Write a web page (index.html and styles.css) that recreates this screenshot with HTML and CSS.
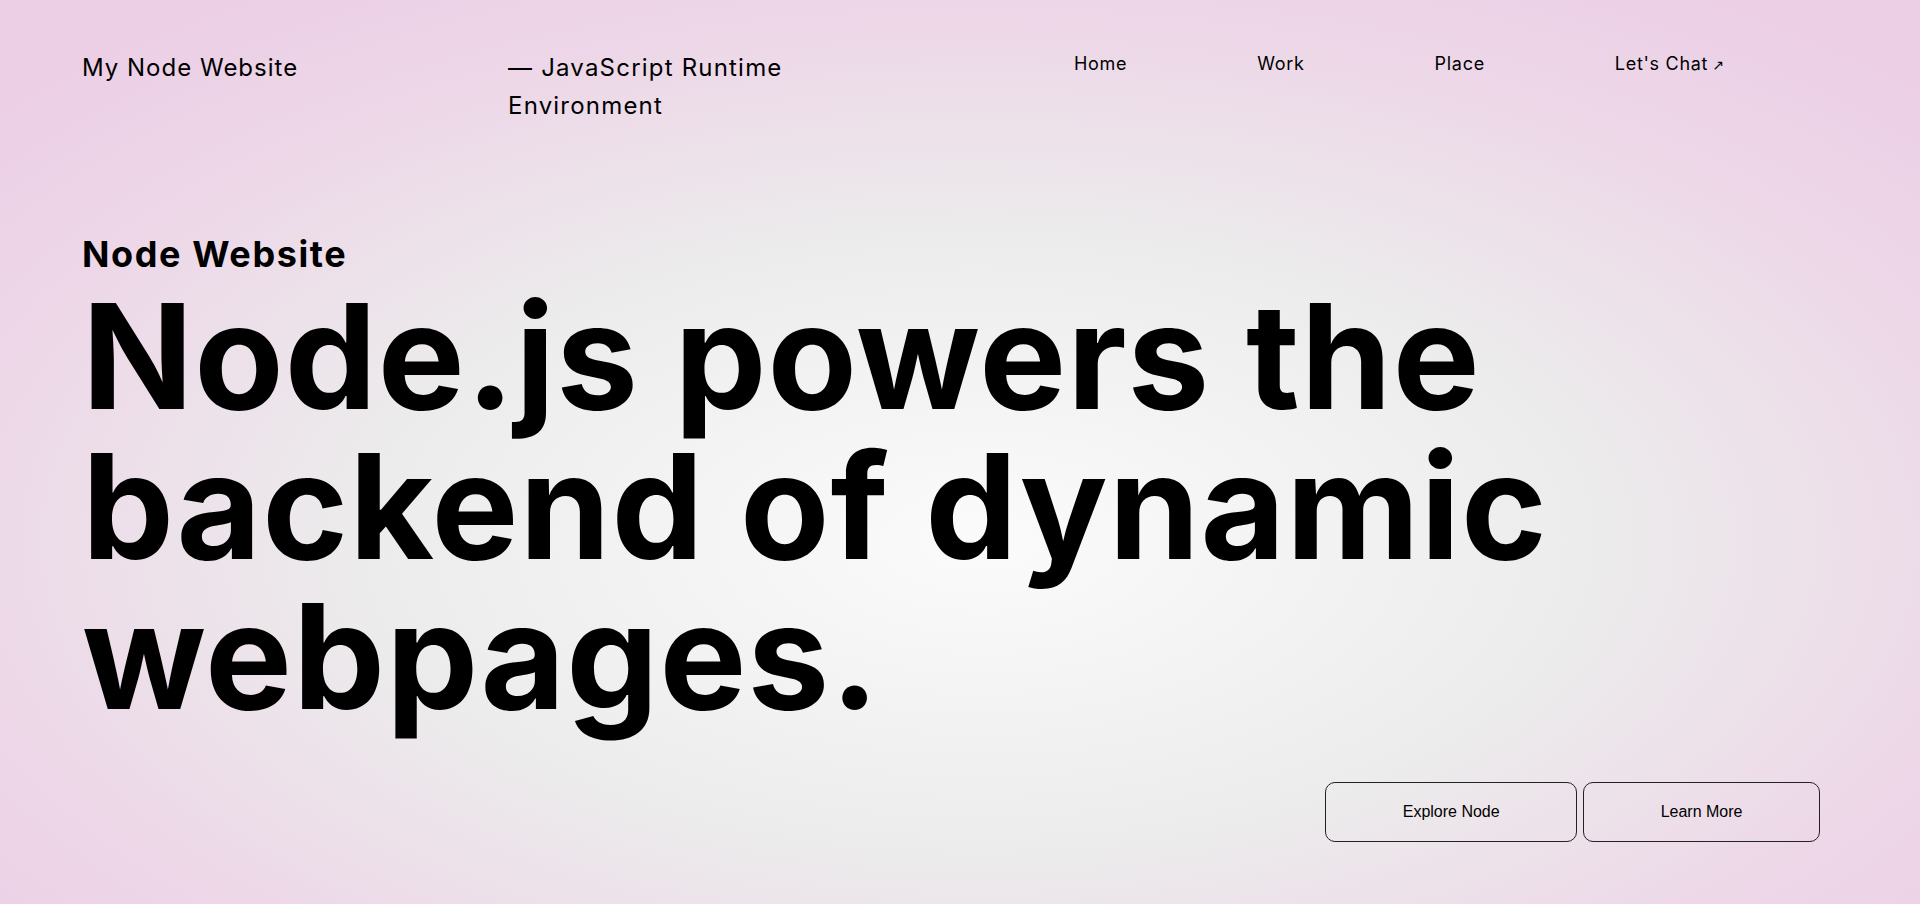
FILE: index.html
```html
<!DOCTYPE html>
<html lang="en">
<head>
<meta charset="utf-8">
<title>My Node Website</title>
<link rel="stylesheet" href="styles.css">
</head>
<body>
<div class="page">
  <header class="header">
    <div class="logo">My Node Website</div>
    <div class="tagline">— JavaScript Runtime Environment</div>
    <nav class="nav">
      <a href="#" class="nav-link">Home</a>
      <a href="#" class="nav-link">Work</a>
      <a href="#" class="nav-link">Place</a>
      <a href="#" class="nav-link">Let's Chat<span class="arrow">↗</span></a>
    </nav>
  </header>
  <main class="hero">
    <h2 class="eyebrow">Node Website</h2>
    <h1 class="title">Node.js powers the backend of dynamic webpages.</h1>
    <div class="actions">
      <button class="btn">Explore Node</button>
      <button class="btn">Learn More</button>
    </div>
  </main>
</div>
</body>
</html>
```

FILE: styles.css
```css
html, body {
  margin: 0;
  padding: 0;
  height: 100%;
}

body {
  font-family: Inter, "Noto Sans", sans-serif;
  color: #000;
  background: radial-gradient(ellipse 70% 75% at 51% 60%, #fbfbfb 0%, #ececec 45%, #edd8e8 75%, #eccee5 100%);
  min-height: 904px;
}

.page {
  padding: 0 82px;
}

.header {
  display: flex;
  align-items: flex-start;
  padding-top: 49px;
}

.logo {
  width: 426px;
  font-size: 24px;
  line-height: 38.4px;
  letter-spacing: 1px;
}

.tagline {
  width: 300px;
  font-size: 24px;
  line-height: 38.4px;
  letter-spacing: 1.2px;
}

.nav {
  display: flex;
  gap: 130px;
  margin-left: 266px;
  margin-top: 4px;
}

.nav-link {
  color: #000;
  text-decoration: none;
  font-size: 18px;
  line-height: 22px;
  letter-spacing: 0.7px;
}

.arrow {
  margin-left: 4px;
  font-size: 14px;
  font-family: "DejaVu Sans", sans-serif;
  letter-spacing: 0;
}

.hero {
  padding-top: 106px;
}

.eyebrow {
  margin: 0 0 5px;
  font-size: 36px;
  line-height: 44px;
  font-weight: 700;
  letter-spacing: 1.6px;
}

.title {
  margin: 0;
  font-size: 146px;
  line-height: 150px;
  font-weight: 700;
  letter-spacing: 1px;
  max-width: 1580px;
}

.actions {
  display: flex;
  justify-content: flex-end;
  gap: 6px;
  margin-top: 51px;
  padding-right: 18px;
}

.btn {
  font-family: "Liberation Sans", Arial, sans-serif;
  font-size: 16px;
  color: #000;
  background: transparent;
  border: 1px solid #222;
  border-radius: 10px;
  padding: 20px 76.5px;
  cursor: pointer;
}
```
